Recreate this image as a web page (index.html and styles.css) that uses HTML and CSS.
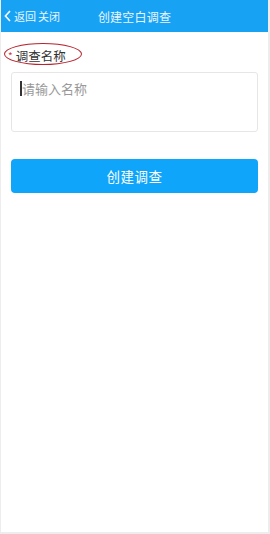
FILE: index.html
```html
<!DOCTYPE html>
<html lang="zh-CN">
<head>
  <meta charset="UTF-8" />
  <meta name="viewport" content="width=device-width, initial-scale=1.0" />
  <title>创建空白调查</title>
  <link rel="stylesheet" href="styles.css">
</head>
<body>

<div class="page">
  <div class="topbar">
    <div class="nav-left">
      <svg class="back-icon" width="7" height="12" viewBox="0 0 7 12"><path d="M6 1 L1.4 6 L6 11" fill="none" stroke="#fff" stroke-width="1.6"/></svg>
      <span>返回</span>
      <span>关闭</span>
    </div>
    <div class="title">创建空白调查</div>
  </div>

  <div class="form">
    <div class="field-label">
      <span class="req">*</span>
      <span>调查名称</span>
    </div>
    <div class="input-box">
      <span class="caret"></span>
      <span class="placeholder">请输入名称</span>
    </div>

    <button class="btn-create" type="button">创建调查</button>
  </div>
</div>

</body>
</html>
```

FILE: styles.css
```css
html, body {
  margin: 0;
  padding: 0;
  height: 100%;
}

body {
  font-family: "Noto Sans CJK SC", "Noto Sans", sans-serif;
  background: #fff;
}

.page {
  box-sizing: border-box;
  height: 534px;
  border-left: 1px solid #ededed;
  border-right: 2px solid #ededed;
  border-bottom: 2px solid #ededed;
}

.topbar {
  position: relative;
  height: 32px;
  background-color: #18a2f4;
  display: flex;
  align-items: center;
  justify-content: center;
  color: #eaf6ff;
}

.nav-left {
  position: absolute;
  left: 3px;
  top: 0;
  height: 32px;
  display: flex;
  align-items: center;
  gap: 2px;
  font-size: 11px;
}

.back-icon {
  margin-right: 1px;
}

.title {
  font-size: 12px;
  letter-spacing: 0.2px;
}

.form {
  padding: 9px 10px 0 10px;
}

.field-label {
  position: relative;
  display: inline-flex;
  align-items: center;
  gap: 3px;
  margin-left: -3px;
  height: 24px;
  font-size: 12.5px;
  color: #333;
}

.field-label::after {
  content: '';
  position: absolute;
  left: -4px;
  top: -1px;
  width: 78px;
  height: 22px;
  border: 1.5px solid #b8232f;
  border-radius: 50%;
  box-sizing: border-box;
}

.req {
  color: #d9383a;
  font-size: 10px;
}

.input-box {
  margin-top: 4px;
  height: 60px;
  border: 1px solid #e6e6e6;
  border-radius: 3px;
  box-sizing: border-box;
  padding: 7px 8px;
  display: flex;
  align-items: flex-start;
}

.caret {
  width: 2px;
  height: 15px;
  background: #333;
  margin-top: 1px;
}

.placeholder {
  font-size: 13px;
  color: #999;
  line-height: 17px;
}

.btn-create {
  display: block;
  width: 100%;
  height: 34px;
  margin-top: 27px;
  border: none;
  border-radius: 4px;
  background-color: #0ea5fa;
  color: #fff;
  font-family: inherit;
  font-size: 13.5px;
  letter-spacing: 0.5px;
}
```
